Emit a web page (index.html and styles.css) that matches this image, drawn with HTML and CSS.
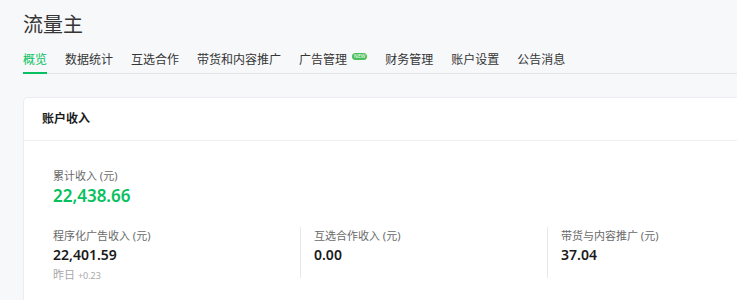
FILE: index.html
```html
<!DOCTYPE html>
<html lang="zh-CN">
<head>
    <meta charset="UTF-8">
    <meta name="viewport" content="width=device-width, initial-scale=1.0">
    <title>流量主</title>
    <link rel="stylesheet" href="styles.css">
</head>
<body>
    <div class="page">
        <div class="header">
            <h1 class="title">流量主</h1>
            <div class="tabs">
                <span class="tab active">概览</span>
                <span class="tab">数据统计</span>
                <span class="tab">互选合作</span>
                <span class="tab">带货和内容推广</span>
                <span class="tab">广告管理<span class="badge">NEW</span></span>
                <span class="tab">财务管理</span>
                <span class="tab">账户设置</span>
                <span class="tab">公告消息</span>
            </div>
        </div>

        <div class="card">
            <div class="card-title">账户收入</div>
            <div class="card-body">
                <div class="total">
                    <div class="stat-label">累计收入 (元)</div>
                    <div class="total-value">22,438.66</div>
                </div>

                <div class="stats-grid">
                    <div class="stat">
                        <div class="stat-label">程序化广告收入 (元)</div>
                        <div class="stat-value">22,401.59</div>
                        <div class="stat-extra">昨日 <span class="num">+0.23</span></div>
                    </div>
                    <div class="stat">
                        <div class="stat-label">互选合作收入 (元)</div>
                        <div class="stat-value">0.00</div>
                    </div>
                    <div class="stat">
                        <div class="stat-label">带货与内容推广 (元)</div>
                        <div class="stat-value">37.04</div>
                    </div>
                </div>
            </div>
        </div>
    </div>
</body>
</html>
```

FILE: styles.css
```css
* {
    margin: 0;
    padding: 0;
    box-sizing: border-box;
    font-family: "Noto Sans", "Noto Sans CJK SC", sans-serif;
}

body {
    background-color: #f7f8fa;
    color: #353535;
    overflow: hidden;
}

.page {
    width: 737px;
    height: 300px;
    padding-left: 23px;
    overflow: hidden;
}

.header {
    border-bottom: 1px solid #e4e5e7;
}

.title {
    font-size: 20px;
    font-weight: normal;
    line-height: 28px;
    padding-top: 11px;
    color: #353535;
}

.tabs {
    display: flex;
    gap: 18px;
    margin-top: 11px;
}

.tab {
    display: flex;
    align-items: center;
    font-size: 12px;
    line-height: 20px;
    padding-bottom: 2px;
    border-bottom: 2px solid transparent;
    margin-bottom: -1px;
}

.tab.active {
    color: #07c160;
    border-bottom-color: #07c160;
}

.badge {
    background-color: #4cbf5a;
    color: #fff;
    font-size: 5px;
    line-height: 7px;
    padding: 0 2px;
    border-radius: 4px;
    margin-left: 5px;
    margin-top: -8px;
}

.card {
    background-color: #fff;
    border: 1px solid #ebedf0;
    border-right: none;
    border-bottom: none;
    border-radius: 5px 0 0 0;
    margin-top: 23px;
    height: 210px;
}

.card-title {
    font-size: 12px;
    font-weight: bold;
    color: #1a1a1a;
    line-height: 20px;
    padding: 11px 18px;
    border-bottom: 1px solid #eef0f2;
}

.card-body {
    padding: 26px 29px;
}

.stat-label {
    font-size: 11px;
    color: #6a6a6a;
    line-height: 18px;
}

.total-value {
    font-size: 17px;
    font-weight: 600;
    color: #07c160;
    line-height: 22px;
}

.stats-grid {
    display: grid;
    grid-template-columns: repeat(3, 247px);
    margin-top: 20px;
}

.stat {
    height: 51px;
}

.stat + .stat {
    border-left: 1px solid #e8e8e8;
    padding-left: 13px;
}

.stat-value {
    font-size: 14px;
    font-weight: 600;
    color: #1a1a1a;
    line-height: 20px;
}

.stat-extra {
    font-size: 11px;
    color: #a8a8a8;
    line-height: 18px;
    margin-top: 1px;
}

.stat-extra .num {
    font-size: 9px;
}
```
